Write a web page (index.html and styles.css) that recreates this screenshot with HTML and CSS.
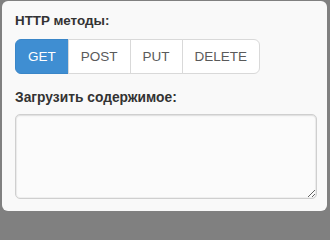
FILE: index.html
```html
<!DOCTYPE html>
<html lang="ru">
<head>
<meta charset="utf-8">
<title>HTTP методы</title>
<link rel="stylesheet" href="styles.css">
</head>
<body>
<div class="card">
  <label class="label">HTTP методы:</label>
  <div class="btn-group">
    <button class="btn active">GET</button>
    <button class="btn">POST</button>
    <button class="btn">PUT</button>
    <button class="btn">DELETE</button>
  </div>
  <label class="label label-second">Загрузить содержимое:</label>
  <textarea class="content"></textarea>
</div>
</body>
</html>
```
FILE: styles.css
```css
html, body {
  margin: 0;
  padding: 0;
  background: #808080;
  width: 330px;
  height: 214px;
  overflow: hidden;
}
body {
  padding: 1px 3px 3px 2px;
  box-sizing: border-box;
  font-family: "Liberation Sans", Arial, sans-serif;
}
.card {
  box-sizing: border-box;
  height: 210px;
  background: #f9f9f9;
  border-radius: 6px;
  padding: 10px 11px 0 13px;
  display: flex;
  flex-direction: column;
  align-items: flex-start;
}
.label {
  display: block;
  font-size: 13.4px;
  line-height: 20px;
  font-weight: bold;
  color: #333;
  margin-bottom: 8px;
}
.label-second {
  font-size: 13.8px;
  margin-top: 14px;
  margin-bottom: 6px;
}
.btn-group {
  display: flex;
}
.btn {
  font-family: "Liberation Sans", Arial, sans-serif;
  font-size: 13.5px;
  line-height: 21px;
  padding: 6px 12px;
  border: 1px solid #d9d9d9;
  background: #fff;
  color: #5a5a5a;
  margin: 0 0 0 -1px;
  border-radius: 0;
}
.btn:first-child {
  margin-left: 0;
  border-radius: 6px 0 0 6px;
}
.btn:last-child {
  border-radius: 0 6px 6px 0;
}
.btn.active {
  background: #3f8ed2;
  border-color: #3a86c8;
  color: #fff;
}
.content {
  box-sizing: border-box;
  width: 302px;
  height: 85px;
  margin: 0;
  border: 1px solid #cfcfcf;
  border-radius: 5px;
  background: #fbfbfb;
  box-shadow: inset 0 1px 2px rgba(0,0,0,.08), inset 0 0 0 1px #f0f0f0;
}
```
